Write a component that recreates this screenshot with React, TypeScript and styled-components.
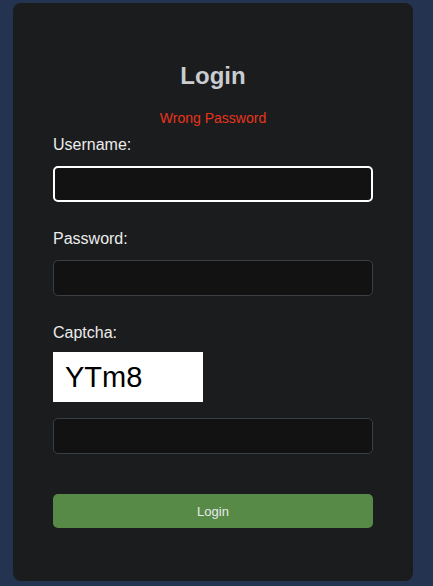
import styled, { createGlobalStyle } from "styled-components";

const GlobalStyle = createGlobalStyle`
  html, body {
    margin: 0;
    padding: 0;
    background-color: #243350;
    font-family: "Liberation Sans", Arial, sans-serif;
  }
  * {
    box-sizing: border-box;
  }
`;

const Page = styled.div`
  padding: 3px 0 5px 13px;
`;

const Card = styled.form`
  width: 400px;
  height: 578px;
  padding: 60px 40px 0;
  background-color: #1b1c1e;
  border-radius: 8px;
  display: flex;
  flex-direction: column;
`;

const Title = styled.h2`
  margin: 0;
  font-size: 24px;
  line-height: 26px;
  font-weight: 700;
  color: #c9ccd0;
  text-align: center;
`;

const ErrorText = styled.div`
  margin-top: 21px;
  font-size: 14px;
  line-height: 16px;
  color: #e8341c;
  text-align: center;
`;

const Label = styled.label<{ gap: number }>`
  margin-top: ${(p) => p.gap}px;
  font-size: 16px;
  line-height: 18px;
  color: #ececec;
`;

const Input = styled.input<{ focused?: boolean; gap?: number }>`
  margin-top: ${(p) => p.gap ?? 12}px;
  width: 320px;
  height: 36px;
  padding: 0 10px;
  background-color: #121213;
  color: #eee;
  font-size: 16px;
  outline: none;
  border-radius: 5px;
  border: ${(p) => (p.focused ? "2px solid #ffffff" : "1px solid #3b3e42")};
`;

const Captcha = styled.div`
  margin-top: 10px;
  width: 150px;
  height: 50px;
  padding-left: 12px;
  background-color: #ffffff;
  color: #000;
  font-size: 29px;
  line-height: 50px;
`;

const Button = styled.button`
  margin-top: 40px;
  width: 320px;
  height: 34px;
  border: none;
  border-radius: 5px;
  background-color: #588a47;
  color: #e6e9ec;
  font-family: "Liberation Sans", Arial, sans-serif;
  font-size: 13px;
  font-weight: 400;
  cursor: pointer;
`;

export default function App() {
  return (
    <>
      <GlobalStyle />
      <Page>
        <Card onSubmit={(e) => e.preventDefault()}>
          <Title>Login</Title>
          <ErrorText>Wrong Password</ErrorText>
          <Label gap={10}>Username:</Label>
          <Input type="text" focused />
          <Label gap={28}>Password:</Label>
          <Input type="password" />
          <Label gap={28}>Captcha:</Label>
          <Captcha>YTm8</Captcha>
          <Input type="text" gap={16} />
          <Button type="submit">Login</Button>
        </Card>
      </Page>
    </>
  );
}
